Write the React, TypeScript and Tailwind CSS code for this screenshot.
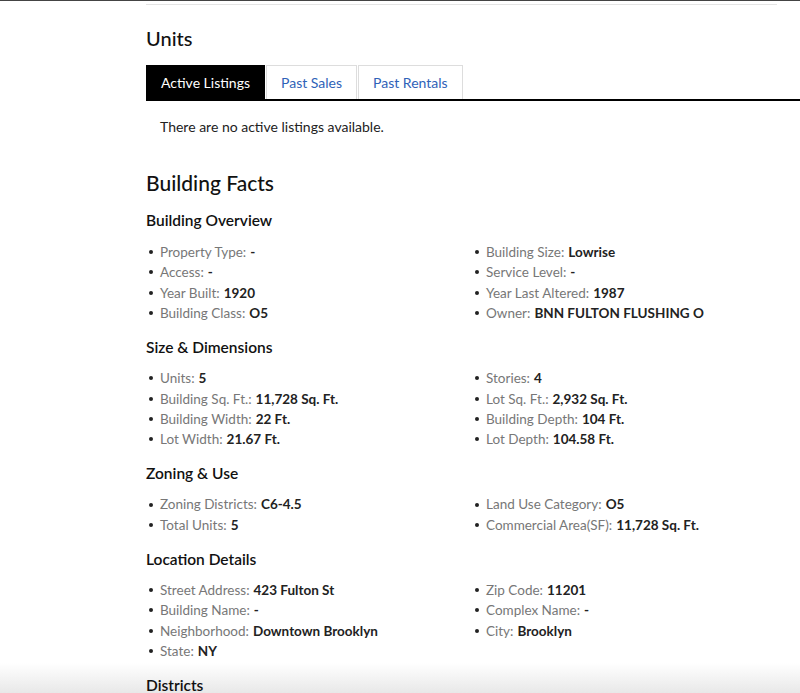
import React, { useState } from 'react';

type Fact = { label: string; value: string };

interface FactGroup {
  title: string;
  left: Fact[];
  right: Fact[];
}

const GROUPS: FactGroup[] = [
  {
    title: 'Building Overview',
    left: [
      { label: 'Property Type', value: '-' },
      { label: 'Access', value: '-' },
      { label: 'Year Built', value: '1920' },
      { label: 'Building Class', value: 'O5' },
    ],
    right: [
      { label: 'Building Size', value: 'Lowrise' },
      { label: 'Service Level', value: '-' },
      { label: 'Year Last Altered', value: '1987' },
      { label: 'Owner', value: 'BNN FULTON FLUSHING O' },
    ],
  },
  {
    title: 'Size & Dimensions',
    left: [
      { label: 'Units', value: '5' },
      { label: 'Building Sq. Ft.', value: '11,728 Sq. Ft.' },
      { label: 'Building Width', value: '22 Ft.' },
      { label: 'Lot Width', value: '21.67 Ft.' },
    ],
    right: [
      { label: 'Stories', value: '4' },
      { label: 'Lot Sq. Ft.', value: '2,932 Sq. Ft.' },
      { label: 'Building Depth', value: '104 Ft.' },
      { label: 'Lot Depth', value: '104.58 Ft.' },
    ],
  },
  {
    title: 'Zoning & Use',
    left: [
      { label: 'Zoning Districts', value: 'C6-4.5' },
      { label: 'Total Units', value: '5' },
    ],
    right: [
      { label: 'Land Use Category', value: 'O5' },
      { label: 'Commercial Area(SF)', value: '11,728 Sq. Ft.' },
    ],
  },
  {
    title: 'Location Details',
    left: [
      { label: 'Street Address', value: '423 Fulton St' },
      { label: 'Building Name', value: '-' },
      { label: 'Neighborhood', value: 'Downtown Brooklyn' },
      { label: 'State', value: 'NY' },
    ],
    right: [
      { label: 'Zip Code', value: '11201' },
      { label: 'Complex Name', value: '-' },
      { label: 'City', value: 'Brooklyn' },
    ],
  },
];

const TABS = ['Active Listings', 'Past Sales', 'Past Rentals'];

const FactList = ({ items }: { items: Fact[] }) => (
  <ul className="flex flex-col">
    {items.map(item => (
      <li key={item.label} className="flex items-center h-[20.3px] text-[13.5px]">
        <span className="w-[4px] h-[4px] rounded-full bg-[#222] ml-[3px] mr-[7px]" />
        <span className="text-[#777]">{item.label}:</span>
        <span className="ml-[4px] font-bold text-[#222]">{item.value}</span>
      </li>
    ))}
  </ul>
);

export default function App() {
  const [activeTab, setActiveTab] = useState('Active Listings');

  return (
    <div className="min-h-screen bg-white font-['Lato',sans-serif] text-[#111] overflow-hidden">
      <div className="h-px bg-[#444]" />
      <div className="pl-[146px]">
        <div className="mt-[3px] mr-[23px] h-px bg-[#e4e4e4]" />

        <h2 className="mt-[20px] text-[20px] leading-[26px] font-medium">Units</h2>

        <div className="mt-[14px] flex border-b-2 border-black">
          {TABS.map(tab => (
            <button
              key={tab}
              onClick={() => setActiveTab(tab)}
              className={
                tab === activeTab
                  ? 'h-[34px] px-[14px] bg-black text-white text-[14px] border border-black'
                  : 'h-[34px] px-[14px] ml-[1px] bg-white text-[#2f62b8] text-[14px] border border-b-0 border-[#ddd]'
              }
            >
              {tab}
            </button>
          ))}
        </div>

        <p className="mt-[16px] ml-[14px] text-[14px] leading-[20px] text-[#222]">
          There are no active listings available.
        </p>

        <h2 className="mt-[33px] text-[21px] leading-[26px] font-medium">Building Facts</h2>

        <div className="pr-[14px]">
          {GROUPS.map((group, i) => (
            <div key={group.title} className="mt-[13px]">
              <h3 className="text-[15.5px] leading-[22px] font-semibold text-[#111]">{group.title}</h3>
              <div className={`${i === 0 ? 'mt-[11px]' : 'mt-[10px]'} grid grid-cols-[326px_1fr]`}>
                <FactList items={group.left} />
                <FactList items={group.right} />
              </div>
            </div>
          ))}
          <h3 className="mt-[13px] text-[15.5px] leading-[22px] font-semibold text-[#111]">Districts</h3>
          <div className="h-[60px]" />
        </div>
      </div>

      <div className="fixed bottom-0 left-0 right-0 h-[30px] bg-gradient-to-b from-white to-[#e8e8e8] mix-blend-multiply pointer-events-none" />
    </div>
  );
}
